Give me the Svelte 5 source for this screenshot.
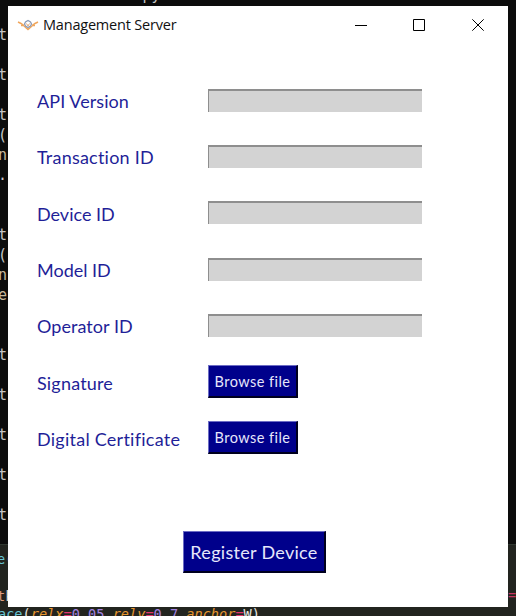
<script>
  const fields = [
    { name: 'API Version', spacing: 0.07 },
    { name: 'Transaction ID', spacing: 0.22 },
    { name: 'Device ID', spacing: 0 },
    { name: 'Model ID', spacing: 0 },
    { name: 'Operator ID', spacing: 0.05 },
    { name: 'Signature', spacing: 0.18, file: true },
    { name: 'Digital Certificate', spacing: 0.25, file: true }
  ];
  const editor = ['                  .py', '', 't', '', 't', '', 't', '(', 'n', '.', '', '', 't', '(', 'n', 'e', '', '', 't', '', 't', '', 't', '', 't', '', 't'];
</script>

<div class="desktop">
  <div class="editor">
    {#each editor as line}
      <div class:warm={line === 'n' || line === 'e'}>{line}</div>
    {/each}
  </div>
  <div class="snippet">
    <div class="call"><span class="fn">e(</span></div>
    <div></div>
    <div class="tk"><span class="self">t</span>k</div>
    <div><span class="fn">ace</span>(<i>relx</i><b>=</b><em>0.05</em>,<i>rely</i><b>=</b><em>0.7</em>,<i>anchor</i><b>=</b>W)</div>
  </div>
  <span class="equals">=</span>

  <main class="window">
    <header>
      <svg class="logo" width="22" height="12" viewBox="0 0 22 12" fill="none">
        <path d="M1 3l3 1.5 3 2M21 3l-3 1.5-3 2M4 6.5h3M18 6.5h-3M7 7l4 3.5L15 7" stroke="#f0a65c" stroke-width="1.5" />
        <path d="M7.5 5l1-2L11 1.5 13.5 3l1 2-1 2L11 8.500 8.500 7z" stroke="#8d9bb5" stroke-width="1.3" />
        <path d="M9.5 4.5L11 7l1.5-2.5" stroke="#e2a878" />
      </svg>
      <h1>Management Server</h1>
      <div class="controls">
        <svg width="12" height="12"><path d="M0 6.5h12" /></svg>
        <svg width="12" height="12"><path d="M.5 .5h11v11h-11z" /></svg>
        <svg class="close" width="12" height="12"><path d="M.3 .3l11.4 11.4M11.7 .3L.3 11.7" /></svg>
      </div>
    </header>
    <form>
      {#each fields as field}
        <div class="row">
          <label for={field.name} style:letter-spacing="{field.spacing}px">{field.name}</label>
          {#if field.file}
            <button type="button" id={field.name}>Browse file</button>
          {:else}
            <input id={field.name} />
          {/if}
        </div>
      {/each}
      <button type="button" class="register">Register Device</button>
    </form>
  </main>
</div>

<style>
  :global(body) { margin: 0; }
  .desktop {
    position: relative;
    width: 516px;
    height: 616px;
    overflow: hidden;
    background: #0c0c0c;
    font-family: "DejaVu Sans Mono", monospace;
  }
  .editor {
    height: 544px;
    overflow: hidden;
    font-size: 15px;
    color: #c5c5c5;
  }
  .editor div { height: 20px; line-height: 20px; white-space: pre; margin-left: -2px; }
  .editor div:first-child { margin-top: -15px; margin-left: -29px; }
  .editor .warm { color: #c8b89c; }
  .snippet {
    height: 72px;
    padding-top: 5px;
    box-sizing: border-box;
    background: #22241f;
    border-top: 1px solid #303831;
    font-size: 13.6px;
    color: #e8e8e2;
  }
  .snippet div { height: 18.4px; line-height: 18.4px; white-space: pre; margin-left: -2px; }
  .snippet .call { margin-left: -3px; }
  .snippet .tk { margin-left: -3px; }
  .fn { color: #67c4d4; }
  .self { color: #db9b7c; }
  .snippet i { color: #e6962e; }
  .snippet b { color: #e0366f; font-weight: 400; }
  .snippet em { color: #a382e0; font-style: normal; }
  .equals { position: absolute; left: 508px; top: 587px; font-size: 13.5px; line-height: 16px; color: #c63661; }
  .window {
    position: absolute;
    left: 8px;
    top: 6px;
    width: 500px;
    height: 601px;
    background: #fff;
    font-family: Lato, sans-serif;
    font-variant-ligatures: none;
  }
  header { display: flex; align-items: center; height: 38px; padding: 0 24px 0 9px; box-sizing: border-box; }
  h1 {
    margin: 0 0 2px 4px;
    font: 400 14.5px "Open Sans", sans-serif;
    letter-spacing: -0.2px;
    color: #111;
    white-space: nowrap;
  }
  .controls { display: flex; gap: 46px; margin-left: auto; }
  .controls .close { margin-left: 1px; }
  .controls svg { fill: none; stroke: #000; stroke-width: 1; }
  form { display: flex; flex-direction: column; padding: 29px 0 0 29px; }
  .row { display: flex; align-items: center; height: 56.3px; }
  label { width: 171px; font-size: 18px; color: #1f1f98; white-space: nowrap; }
  input {
    box-sizing: border-box;
    width: 214px;
    height: 23px;
    margin: 0 0 2px;
    padding: 0;
    border: 0 solid #8e8e8e;
    border-width: 2px 0 0 1.5px;
    border-radius: 0;
    background: #d3d3d3;
  }
  button {
    box-sizing: border-box;
    width: 90px;
    height: 33px;
    margin: 0 0 2px;
    padding: 0;
    border: solid;
    border-width: 1px 2px 2px 1px;
    border-color: #6c6cc4 #00001e #00001e #6c6cc4;
    background: #00008b;
    color: #e7e7fb;
    font: 14.5px Lato, sans-serif;
    font-variant-ligatures: none;
    letter-spacing: 0.45px;
    white-space: nowrap;
  }
  .register { width: 143px; height: 42px; margin: 64px 0 0 146px; font-size: 18px; letter-spacing: 0.3px; }
</style>
